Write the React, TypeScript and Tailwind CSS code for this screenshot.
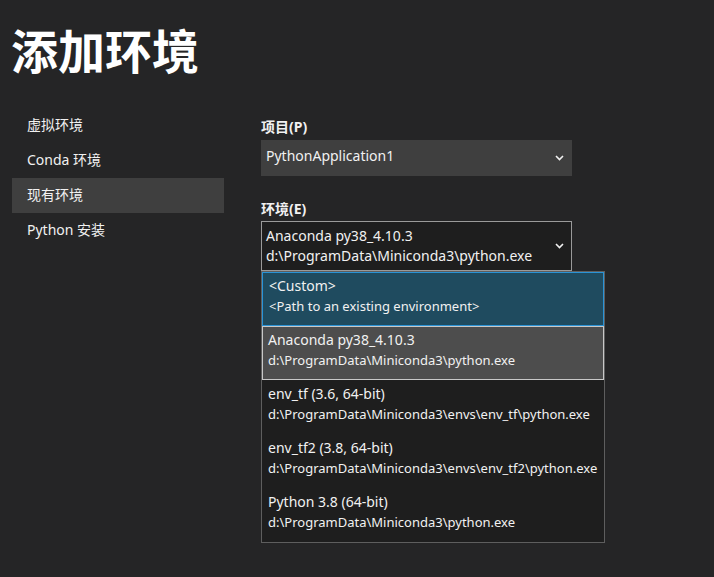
import React from 'react';

const NAV = ['虚拟环境', 'Conda 环境', '现有环境', 'Python 安装'];

const ENVS = [
  { name: 'Anaconda py38_4.10.3', path: 'd:\\ProgramData\\Miniconda3\\python.exe', selected: true },
  { name: 'env_tf (3.6, 64-bit)', path: 'd:\\ProgramData\\Miniconda3\\envs\\env_tf\\python.exe' },
  { name: 'env_tf2 (3.8, 64-bit)', path: 'd:\\ProgramData\\Miniconda3\\envs\\env_tf2\\python.exe' },
  { name: 'Python 3.8 (64-bit)', path: 'd:\\ProgramData\\Miniconda3\\python.exe' },
];

function Chevron() {
  return (
    <svg width="9" height="6" viewBox="0 0 9 6" className="shrink-0">
      <polyline points="1,1 4.5,4.5 8,1" fill="none" stroke="#f1f1f1" strokeWidth="1.6" />
    </svg>
  );
}

export default function App() {
  return (
    <div
      className="w-[714px] h-[577px] bg-[#252526] text-[#f1f1f1] overflow-hidden"
      style={{ fontFamily: '"Noto Sans", "Noto Sans CJK SC", sans-serif' }}
    >
      <div className="pl-[11px] pt-[28px] h-[108px]">
        <h1 className="text-[47px] leading-[47px] font-bold text-white">添加环境</h1>
      </div>

      <div className="flex">
        <nav className="ml-[12px] w-[212px] flex flex-col">
          {NAV.map((n, i) => (
            <div
              key={n}
              className={
                'h-[35px] flex items-center pl-[15px] pb-[2px] text-[14px] ' + (i === 2 ? 'bg-[#3f3f3f]' : '')
              }
            >
              {n}
            </div>
          ))}
        </nav>

        <div className="ml-[37px] pt-[8px] flex flex-col">
          <div className="h-[20px] flex items-center text-[14px] font-bold">项目(P)</div>
          <div className="mt-[4px] w-[311px] h-[36px] bg-[#3f3f3f] flex items-center justify-between pl-[5px] pr-[8px] text-[14px]">
            <span className="pb-[5px]">PythonApplication1</span>
            <Chevron />
          </div>

          <div className="mt-[22px] h-[20px] flex items-center text-[14px] font-bold">环境(E)</div>
          <div className="mt-[3px] w-[311px] h-[50px] bg-[#1e1e1e] border border-[#9a9a9a] flex items-center justify-between pl-[4px] pr-[7px]">
            <div className="flex flex-col leading-[20px] pb-[1px]">
              <span className="text-[14px]">Anaconda py38_4.10.3</span>
              <span className="text-[14px]">d:\ProgramData\Miniconda3\python.exe</span>
            </div>
            <Chevron />
          </div>

          <div className="w-[344px] h-[272px] bg-[#1e1e1e] border border-[#5e5e5e] flex flex-col">
            <div className="h-[54px] bg-[#1f4b5f] border border-[#2a93d6] flex flex-col justify-center pl-[6px] pb-[6px] leading-[21px]">
              <span className="text-[14px]">&lt;Custom&gt;</span>
              <span className="text-[13px]">&lt;Path to an existing environment&gt;</span>
            </div>
            {ENVS.map((e) => (
              <div
                key={e.path + e.name}
                className={
                  'h-[54px] flex flex-col justify-center pl-[5px] pb-[6px] leading-[21px] border ' +
                  (e.selected ? 'bg-[#4d4d4d] border-[#c8c8c8]' : 'border-transparent')
                }
              >
                <span className="text-[14px]">{e.name}</span>
                <span className="text-[13px]">{e.path}</span>
              </div>
            ))}
          </div>
        </div>
      </div>
    </div>
  );
}
